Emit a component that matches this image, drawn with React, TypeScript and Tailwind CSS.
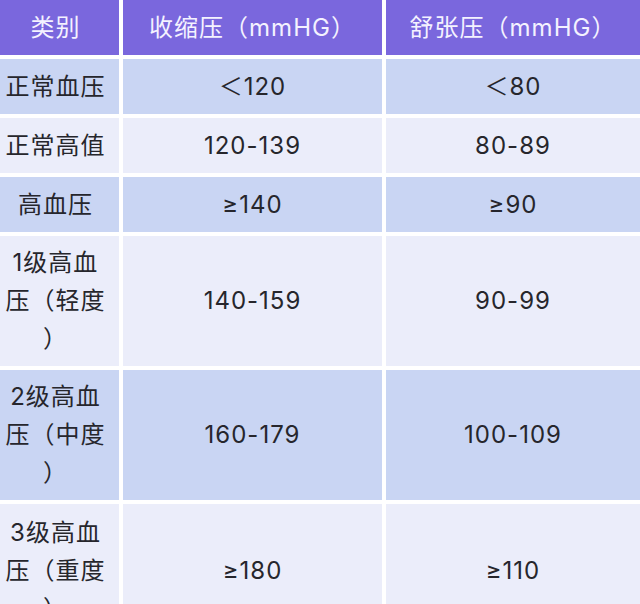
import React from "react";

const dark = "bg-[#c9d5f3]";
const light = "bg-[#ebedfa]";

type Row = { label: string[]; sys: string; dia: string; h: string; bg: string };

const rows: Row[] = [
  { label: ["正常血压"], sys: "＜120", dia: "＜80", h: "h-[55px]", bg: dark },
  { label: ["正常高值"], sys: "120-139", dia: "80-89", h: "h-[55px]", bg: light },
  { label: ["高血压"], sys: "≥140", dia: "≥90", h: "h-[55px]", bg: dark },
  { label: ["1级高血", "压（轻度", "）"], sys: "140-159", dia: "90-99", h: "h-[130px]", bg: light },
  { label: ["2级高血", "压（中度", "）"], sys: "160-179", dia: "100-109", h: "h-[130px]", bg: dark },
  { label: ["3级高血", "压（重度", "）"], sys: "≥180", dia: "≥110", h: "h-[134px]", bg: light },
];

export default function App() {
  return (
    <div
      className="w-[640px] h-[604px] overflow-hidden bg-white text-[#26262c]"
      style={{ fontFamily: 'Inter, "Noto Sans CJK SC", sans-serif' }}
    >
      <div className="grid grid-cols-[119px_259px_254px] gap-x-[4px] gap-y-[4px] text-[24px] tracking-[1px]">
        <div className="h-[55px] bg-[#7a67dd] text-[#f4f2ff] flex items-center justify-center pr-[8px]">类别</div>
        <div className="h-[55px] bg-[#7a67dd] text-[#f4f2ff] flex items-center justify-center">收缩压（mmHG）</div>
        <div className="h-[55px] bg-[#7a67dd] text-[#f4f2ff] flex items-center justify-center">舒张压（mmHG）</div>
        {rows.map((r, i) => (
          <React.Fragment key={i}>
            <div className={`${r.h} ${r.bg} flex flex-col items-center justify-center leading-[38px] pr-[8px]`}>
              {r.label.map((l, j) => (
                <span key={j} className="whitespace-nowrap">{l}</span>
              ))}
            </div>
            <div className={`${r.h} ${r.bg} flex items-center justify-center`}>{r.sys}</div>
            <div className={`${r.h} ${r.bg} flex items-center justify-center`}>{r.dia}</div>
          </React.Fragment>
        ))}
      </div>
    </div>
  );
}
